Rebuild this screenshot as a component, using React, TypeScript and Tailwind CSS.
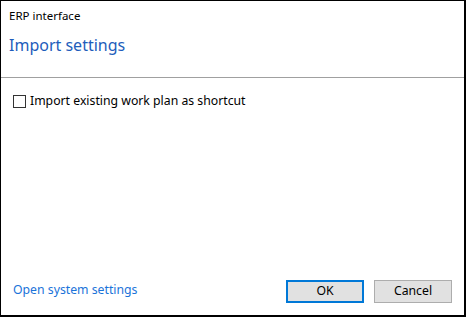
export default function App() {
  return (
    <div
      className="w-[466px] h-[317px] bg-white border-l border-t border-r-2 border-b-2 border-black flex flex-col text-[12.25px] text-black"
      style={{ fontFamily: '"Segoe UI", "Noto Sans", sans-serif' }}
    >
      {/* Header */}
      <div className="h-[77px] border-b border-[#a0a0a0] px-[8px] pt-[7px]">
        <div className="text-[11.5px] leading-[16px]">ERP interface</div>
        <div className="mt-[11px] text-[16px] leading-[20px] text-[#1e5dbb]">Import settings</div>
      </div>

      {/* Body */}
      <div className="flex-1 px-[12px] pt-[15px]">
        <label className="flex items-center gap-[4px] leading-[16px]">
          <span className="w-[13px] h-[13px] border border-[#333333] bg-white" />
          <span>Import existing work plan as shortcut</span>
        </label>
      </div>

      {/* Footer */}
      <div className="flex items-center justify-between pl-[12px] pr-[12px] pb-[12px]">
        <a className="text-[#1a73d9] leading-[16px] -mt-[4px]">Open system settings</a>
        <div className="flex gap-[10px]">
          <button className="w-[78px] h-[23px] bg-[#e1e1e1] border-2 border-[#0078d7]">OK</button>
          <button className="w-[78px] h-[23px] bg-[#e1e1e1] border border-[#adadad]">Cancel</button>
        </div>
      </div>
    </div>
  );
}
